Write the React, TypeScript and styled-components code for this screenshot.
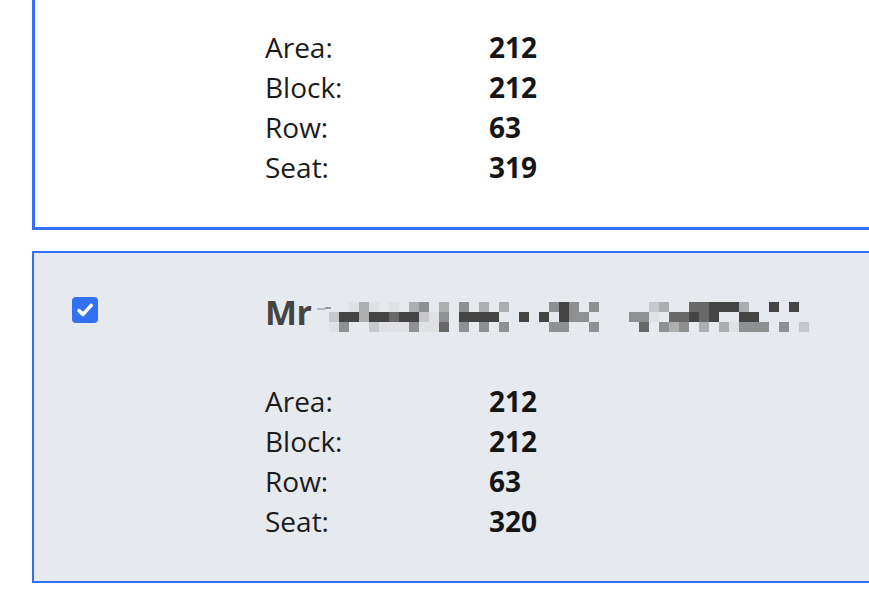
import React from "react";
import styled, { createGlobalStyle } from "styled-components";

const GlobalStyle = createGlobalStyle`
  html, body {
    margin: 0;
    padding: 0;
    background: #ffffff;
    overflow: hidden;
  }
  body {
    font-family: "Open Sans", "Noto Sans", sans-serif;
    color: #1b1b1b;
  }
`;

// gray levels of the pixelated name, one char per 10px block
const shades: Record<string, string> = {
  a: "#dfe1e5",
  b: "#c6c8cc",
  c: "#adaeb0",
  d: "#8f9092",
  e: "#686869",
  f: "#444444",
};

const mosaicRows = [
  "..aca.a.cd.c.d.c.c....dfd.d.....bc..eefffc..f.f.",
  "bffcffeffbad.ffff..f.f.fdd....dda.eefef..ff.....",
  "ad..baaadaae.d.d.d....dd..d....e.dcd.c.caddd.d.b",
];

type Ticket = {
  id: number;
  seat: string;
  selected: boolean;
  focused: boolean;
};

const tickets: Ticket[] = [
  { id: 1, seat: "319", selected: false, focused: true },
  { id: 2, seat: "320", selected: true, focused: false },
];

function Mosaic() {
  return (
    <MosaicSvg width={494} height={30} viewBox="0 0 494 30">
      <rect x={2} y={6} width={8} height={2} fill="#b7b9bd" />
      <rect x={10} y={5} width={6} height={2} fill="#9a9b9e" />
      {mosaicRows.map((row, r) =>
        row.split("").map((ch, k) =>
          ch === "." ? null : (
            <rect
              key={`${r}-${k}`}
              x={14 + k * 10}
              y={r * 10}
              width={10}
              height={10}
              fill={shades[ch]}
            />
          )
        )
      )}
    </MosaicSvg>
  );
}

function CheckBox({ checked }: { checked: boolean }) {
  return (
    <Box $checked={checked}>
      {checked && (
        <svg width="26" height="26" viewBox="0 0 26 26">
          <path
            d="M7 13.6 L11 17.4 L19.2 8.4"
            fill="none"
            stroke="#ffffff"
            strokeWidth="3.6"
            strokeLinecap="round"
            strokeLinejoin="round"
          />
        </svg>
      )}
    </Box>
  );
}

export default function App() {
  return (
    <>
      <GlobalStyle />
      <List>
        {tickets.map((t) => (
          <Card key={t.id} $selected={t.selected} $focused={t.focused}>
            <CheckCell>
              <CheckBox checked={t.selected} />
            </CheckCell>
            <Body>
              <NameRow>
                <Name>Mr</Name>
                <Mosaic />
              </NameRow>
              <Details>
                <Label>Area:</Label>
                <Value>212</Value>
                <Label>Block:</Label>
                <Value>212</Value>
                <Label>Row:</Label>
                <Value>63</Value>
                <Label>Seat:</Label>
                <Value>{t.seat}</Value>
              </Details>
            </Body>
          </Card>
        ))}
      </List>
    </>
  );
}

const List = styled.div`
  display: flex;
  flex-direction: column;
  gap: 21px;
  margin-top: -104px;
  padding-left: 32px;
`;

const Card = styled.div<{ $selected: boolean; $focused: boolean }>`
  display: grid;
  grid-template-columns: ${(p) => (p.$focused ? "230px" : "231px")} 1fr;
  width: 900px;
  padding: 39px 0 40px;
  border: ${(p) => (p.$focused ? "3px" : "2px")} solid #3370f5;
  background: ${(p) => (p.$selected ? "#e6e9ee" : "#ffffff")};
`;

const CheckCell = styled.div`
  padding: 5px 0 0 38px;
`;

const Box = styled.span<{ $checked: boolean }>`
  display: flex;
  align-items: center;
  justify-content: center;
  width: 26px;
  height: 26px;
  box-sizing: border-box;
  border-radius: 4px;
  background: ${(p) => (p.$checked ? "#3470f2" : "#ffffff")};
  border: ${(p) => (p.$checked ? "none" : "2px solid #767676")};
`;

const Body = styled.div`
  display: flex;
  flex-direction: column;
  gap: 49px;
`;

const NameRow = styled.div`
  display: flex;
  align-items: center;
  height: 40px;
`;

const Name = styled.span`
  font-size: 34px;
  font-weight: 700;
  line-height: 40px;
  color: #444444;
  letter-spacing: -0.5px;
`;

const MosaicSvg = styled.svg`
  flex: none;
  margin: 10px 0 0 3px;
`;

const Details = styled.div`
  display: grid;
  grid-template-columns: 224px auto;
  justify-content: start;
  font-size: 28px;
  line-height: 40px;
`;

const Label = styled.span`
  color: #1b1b1b;
`;

const Value = styled.span`
  font-weight: 700;
  color: #151515;
`;
